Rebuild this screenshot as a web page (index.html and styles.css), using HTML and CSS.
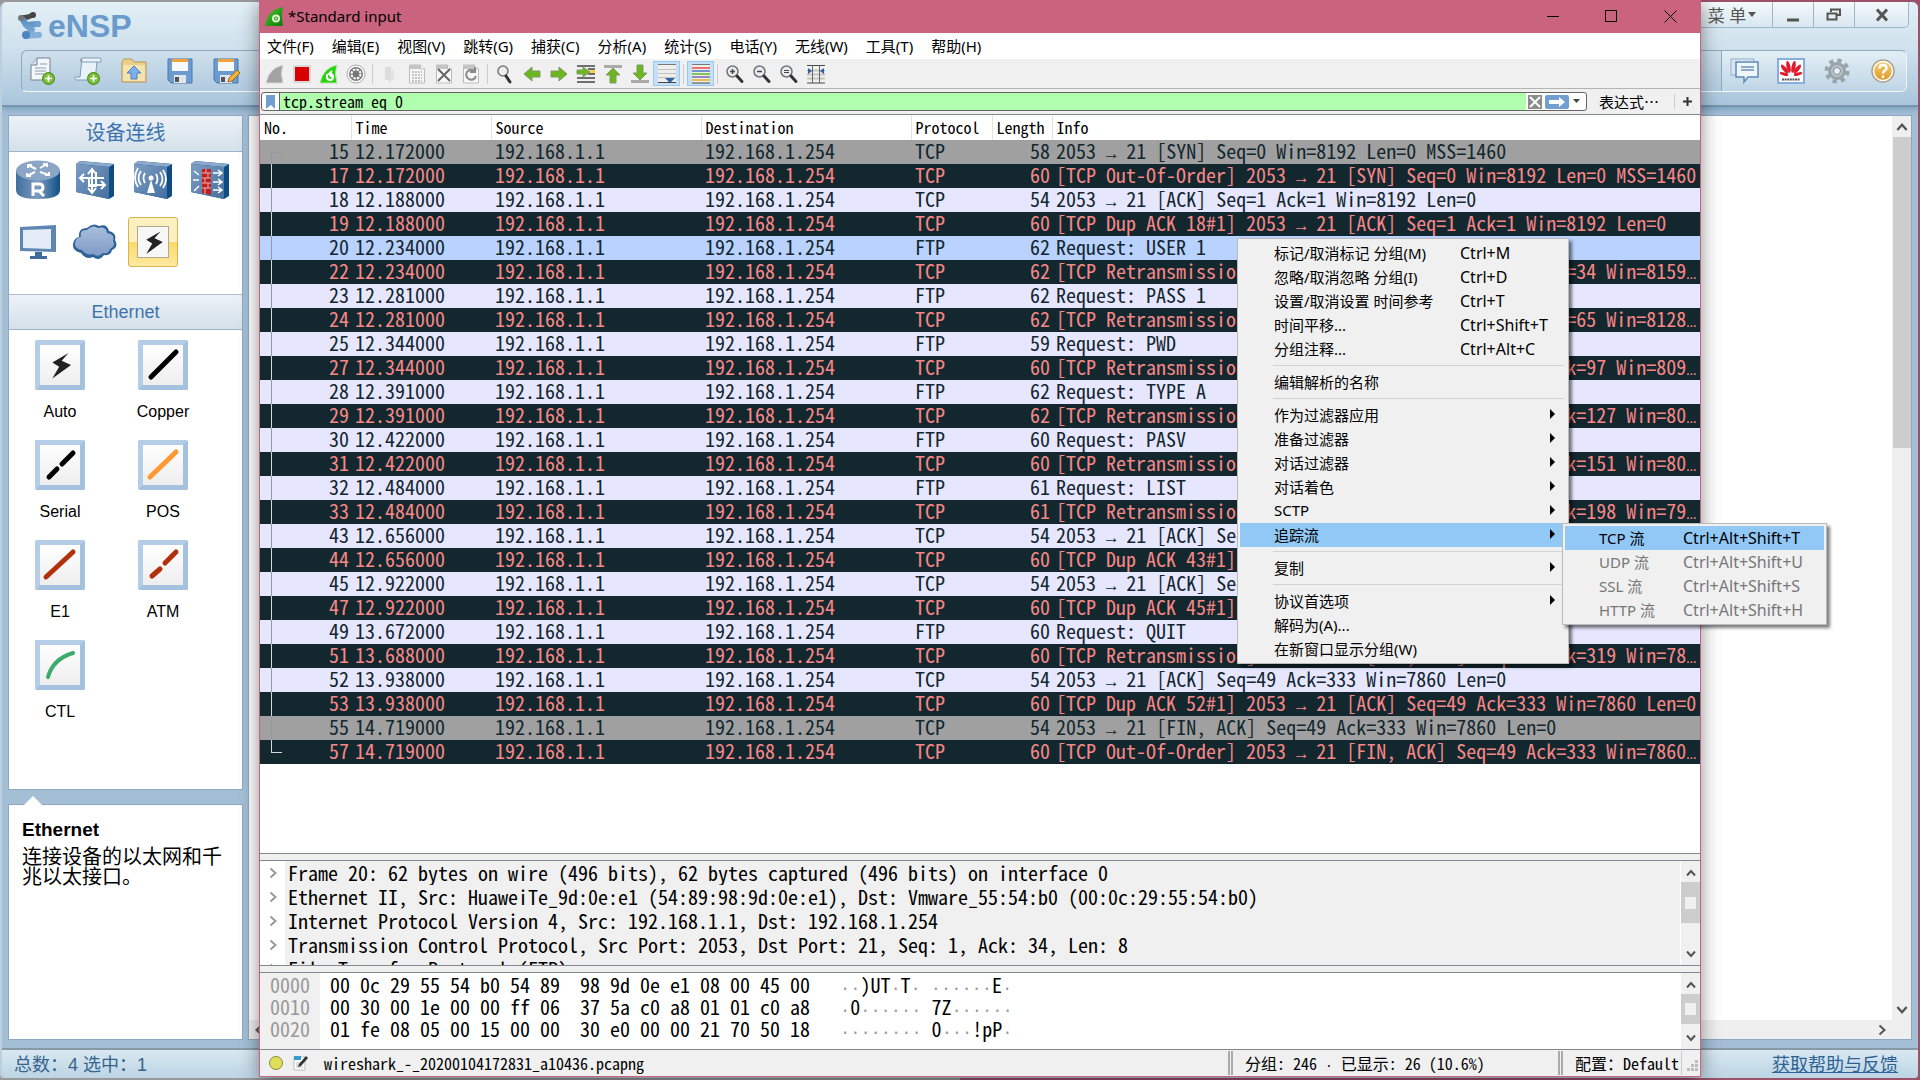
FILE: index.html
```html
<!DOCTYPE html>
<html lang="zh-CN">
<head>
<meta charset="utf-8">
<title>*Standard input</title>
<link rel="stylesheet" href="styles.css">
</head>
<body>
<svg class="defs" aria-hidden="true">
  <defs>
    <linearGradient id="blueFace" x1="0" y1="0" x2="1" y2="1"><stop offset="0" stop-color="#7d9ec4"/><stop offset="1" stop-color="#446f9f"/></linearGradient>
    <linearGradient id="blueSide" x1="0" y1="0" x2="1" y2="0"><stop offset="0" stop-color="#3f6f9e"/><stop offset=".5" stop-color="#7d9cc0"/><stop offset="1" stop-color="#0f4f85"/></linearGradient>
    <linearGradient id="cloudFill" x1="0" y1="0" x2="0" y2="1"><stop offset="0" stop-color="#a9bedb"/><stop offset="1" stop-color="#7f9cc6"/></linearGradient>
    <linearGradient id="logoFill" x1="0" y1="0" x2="0" y2="1"><stop offset="0" stop-color="#5b8fc4"/><stop offset="1" stop-color="#86b2da"/></linearGradient>
    <linearGradient id="finGreen" x1="0" y1="0" x2="1" y2="1"><stop offset="0" stop-color="#4fc62a"/><stop offset="1" stop-color="#0b7a08"/></linearGradient>
    <linearGradient id="gold" x1="0" y1="0" x2="0" y2="1"><stop offset="0" stop-color="#fbd47a"/><stop offset="1" stop-color="#d9941a"/></linearGradient>
    <symbol id="plus" viewBox="0 0 12 12"><circle cx="6" cy="6" r="5.5" fill="#7cbf3a" stroke="#4c8d1e"/><path d="M6 3v6M3 6h6" stroke="#fff" stroke-width="1.6"/></symbol>
    <symbol id="box3d" viewBox="0 0 40 40"><path d="M1 4 5 1 39 4 39 36 34 39 1 32z" fill="#0d4d83"/><path d="M1 4 5 1 39 4 34 7z" fill="#8aa9cb"/><path d="M1 4 34 7 34 39 1 32z" fill="url(#blueFace)"/></symbol>
    <symbol id="lens" viewBox="0 0 20 20"><circle cx="7.500" cy="7.500" r="5.500" fill="#e9ecee" stroke="#70757a" stroke-width="1.500"/><path d="M12 12l5 5.500" stroke="#333" stroke-width="3" stroke-linecap="round"/></symbol>
    <symbol id="sheet" viewBox="0 0 20 20"><path d="M2.500 1h11l4 4v14h-15z" fill="#f7f7f7" stroke="#bcbcbc"/><path d="M2.500 1h11v4h-11z" fill="#c4c4c4"/><path d="M13.500 1v4h4" fill="#fff" stroke="#bcbcbc"/></symbol>
    <symbol id="bolt" viewBox="0 0 40 40"><path d="M30 6 11 17l8 5-8 14 22-16-11-5z" fill="#222"/></symbol>
    <symbol id="up" viewBox="0 0 12 12"><path d="M2 8.500 6 4l4 4.500" fill="none" stroke="#555" stroke-width="2"/></symbol>
    <symbol id="down" viewBox="0 0 12 12"><path d="M2 3.500 6 8l4-4.500" fill="none" stroke="#555" stroke-width="2"/></symbol>
    <symbol id="right" viewBox="0 0 12 12"><path d="M3.500 1.500 8.500 6l-5 4.500" fill="none" stroke="currentColor" stroke-width="2"/></symbol>
    <symbol id="tri" viewBox="0 0 6 10"><path d="M0 0l5 5-5 5z"/></symbol>
    <symbol id="arrowR" viewBox="0 0 20 20"><path d="M2 7h8V3l8 7-8 7v-4H2z" fill="#6cb61e" stroke="#7f9a68"/></symbol>
  </defs>
</svg>

<main class="ensp">
  <header class="ensp-head">
    <div class="ensp-title">
      <div class="logo">
        <svg width="28" height="28" viewBox="0 0 28 28"><path d="M3 6 10 5 15 3" stroke="#4a4a4a" stroke-width="5" fill="none" stroke-linecap="round"/><path d="M5 8 8 13 20 12M8 13l6 5-6 6 13-1" stroke="url(#logoFill)" stroke-width="6" fill="none" stroke-linecap="round" stroke-linejoin="round"/><circle cx="3" cy="6" r="3" fill="#777"/><circle cx="15" cy="3" r="3" fill="#444"/><circle cx="20" cy="12" r="3" fill="#6ea1d2"/><circle cx="8" cy="23" r="4" fill="#4c86c0"/></svg>
        <span class="logo-text">eNSP</span>
      </div>
      <nav class="win-ctl">
        <button class="wc-menu">菜 单<svg width="8" height="6" viewBox="0 0 8 6"><path d="M0 0h8L4 5z" fill="#555"/></svg></button>
        <button aria-label="最小化"><svg width="14" height="14"><path d="M1 12h12" stroke="#555" stroke-width="3"/></svg></button>
        <button aria-label="还原"><svg width="16" height="14"><path d="M5 4V1.500h9V7h-3M1.500 5.500h9v6h-9z" fill="none" stroke="#555" stroke-width="2"/></svg></button>
        <button class="wc-close" aria-label="关闭"><svg width="14" height="14"><path d="M2 1.500l10 11M12 1.500l-10 11" stroke="#555" stroke-width="3"/></svg></button>
      </nav>
    </div>
    <div class="ensp-bar">
      <div class="bar-group">
        <button aria-label="新建拓扑"><svg width="26" height="28" viewBox="0 0 26 28"><path d="M8 1h13v22H2V8z" fill="#f4f7fa" stroke="#6f8396"/><path d="M8 1v7H2" fill="#d7dfe7" stroke="#6f8396"/><path d="M6 11h11M6 14h11M6 17h9M11 7h7" stroke="#8b9dae"/><use href="#plus" x="13" y="15" width="13" height="13"/></svg></button>
        <button aria-label="新建试卷"><svg width="28" height="28" viewBox="0 0 28 28"><path d="M8 1h18q2 0 1 4h-4l-2 18H4q-4 0-3-3h5z" fill="#e9f2f8" stroke="#7e9bb3"/><path d="M8 1q-3 1-1 4h16" fill="none" stroke="#7e9bb3"/><use href="#plus" x="13" y="15" width="13" height="13"/></svg></button>
        <button aria-label="打开"><svg width="28" height="28" viewBox="0 0 28 28"><path d="M2 5 4 2h8l2 3h12v20H2z" fill="#ecd08a" stroke="#b8965a"/><path d="M3 8h22v16H3z" fill="#f5e3ae"/><path d="M14 9l7 7h-4v6h-6v-6H7z" fill="#7db0ee" stroke="#4c7fc0"/></svg></button>
        <button aria-label="保存"><svg width="26" height="26" viewBox="0 0 26 26"><path d="M1 1h24v24H4l-3-3z" fill="#6b9bd0" stroke="#4a78ac"/><path d="M5 1h16v12H5z" fill="#f6f8fa"/><path d="M5 1h16v3H5z" fill="#f0a23c"/><path d="M7 17h12v8H7z" fill="#dfe6ec"/><path d="M8 19h4v5H8z" fill="#555"/></svg></button>
        <button aria-label="另存为"><svg width="27" height="26" viewBox="0 0 27 26"><path d="M1 1h24v24H4l-3-3z" fill="#6b9bd0" stroke="#4a78ac"/><path d="M5 1h16v12H5z" fill="#f6f8fa"/><path d="M5 1h16v3H5z" fill="#f0a23c"/><path d="M7 17h12v8H7z" fill="#dfe6ec"/><path d="M8 19h4v5H8z" fill="#555"/><path d="M15 24l1-4 8-8 3 3-8 8z" fill="#f3b540" stroke="#9a6a1c"/></svg></button>
      </div>
      <div class="bar-group bar-right">
        <button aria-label="论坛"><svg width="30" height="26" viewBox="0 0 30 26"><path d="M1 1h23v16H1z" fill="#d8e6f2" stroke="#8fb0cf"/><path d="M6 4h22v15H18l-4 5v-5H6z" fill="#eef5fb" stroke="#5d8bb8" stroke-width="1.500"/><path d="M11 9h13M11 12h13" stroke="#6b94bf" stroke-width="1.500"/></svg></button>
        <button aria-label="官网"><svg width="28" height="26" viewBox="0 0 28 26"><path d="M1 1h26v24H1z" fill="#fff" stroke="#86aede" stroke-width="2"/><g fill="#e01b2c"><ellipse cx="11.500" cy="9" rx="2" ry="6" transform="rotate(-12 11 9)"/><ellipse cx="16.500" cy="9" rx="2" ry="6" transform="rotate(12 17 9)"/><ellipse cx="7.500" cy="11.500" rx="2" ry="5.500" transform="rotate(-38 7 11)"/><ellipse cx="20.500" cy="11.500" rx="2" ry="5.500" transform="rotate(38 21 11)"/><ellipse cx="7" cy="16" rx="4.500" ry="1.500" transform="rotate(15 7 16)"/><ellipse cx="21" cy="16" rx="4.500" ry="1.500" transform="rotate(-15 21 16)"/></g><path d="M5 21.500h18" stroke="#555" stroke-width="2" stroke-dasharray="2 .6"/></svg></button>
        <button aria-label="设置"><svg width="26" height="26" viewBox="0 0 26 26"><circle cx="13" cy="13" r="10.500" fill="none" stroke="#98a4aa" stroke-width="4" stroke-dasharray="4.250 4"/><circle cx="13" cy="13" r="7.500" fill="#b9c4ca" stroke="#98a4aa" stroke-width="3"/><circle cx="13" cy="13" r="3.500" fill="#e9f1f5" stroke="#7c8890"/></svg></button>
        <button aria-label="帮助"><svg width="26" height="26" viewBox="0 0 26 26"><circle cx="13" cy="13" r="11" fill="url(#gold)" stroke="#a9a291" stroke-width="1.500"/><circle cx="13" cy="13" r="9.500" fill="none" stroke="#fff" stroke-width="1.500"/><path d="M9.500 10.500q0-3.500 3.500-3.500t3.500 3q0 2-2 3-1.500 1-1.500 2.500M13 17.500v2.500" fill="none" stroke="#fff" stroke-width="2.500"/></svg></button>
      </div>
    </div>
  </header>

  <div class="ensp-body">
    <aside class="side">
      <section class="panel devices">
        <h2>设备连线</h2>
        <div class="dev-grid">
          <button aria-label="路由器"><svg width="44" height="40" viewBox="0 0 44 40"><path d="M0 10v20q0 9 22 9t22-9V10z" fill="url(#blueSide)"/><ellipse cx="22" cy="10.500" rx="22" ry="10" fill="#8aa5c6"/><path d="M20 9l-8-4M12 8V5h4M24 12l9 3M33 12v3h-4M24 8l7-4M27 4h4v3M19 12l-8 4M11 13v3h4" stroke="#fff" stroke-width="2" fill="none"/><path d="M17 36V24h6q4 0 4 3.500T23 31h-5M23 31l5 5" stroke="#fff" stroke-width="3" fill="none"/></svg></button>
          <button aria-label="交换机"><svg width="40" height="40" viewBox="0 0 40 40"><use href="#box3d"/><path d="M17 10v22M13 14l4-5 4 5M13 28l4 5 4-5M5 18h24M9 14l-4 4 4 4M14 25h16M26 21l4 4-4 4M21 12v14h-7V18" stroke="#fff" stroke-width="2" fill="none"/></svg></button>
          <button aria-label="无线"><svg width="40" height="40" viewBox="0 0 40 40"><use href="#box3d"/><path d="M18 20l-4 13h8z" fill="#fff"/><circle cx="18" cy="18" r="2.500" fill="#fff"/><path d="M12 13q-3 5 0 10M8 11q-5 7 0 14M5 8q-6 10 0 19M23 14q3 5 0 10M27 12q5 7 0 14M30 10q6 9 0 18" stroke="#fff" stroke-width="1.800" fill="none"/></svg></button>
          <button aria-label="防火墙"><svg width="40" height="40" viewBox="0 0 40 40"><use href="#box3d"/><path d="M12 9h9v26l-9-2z" fill="#c02020"/><path d="M12 13h9M12 18h9M12 23h9M12 28h9M16 9v4M18 13v5M15 18v5M18 23v5M15 28v6" stroke="#f0b0b0"/><path d="M4 11l5 4M3 20h6M4 31l5-5M23 13h8M23 22h8M23 30h8M28 10l4 3-4 3M28 19l4 3-4 3M28 27l4 3-4 3" stroke="#fff" stroke-width="1.500" fill="none"/></svg></button>
          <button aria-label="终端"><svg width="38" height="36" viewBox="0 0 38 36"><path d="M1 3 37 1v27L1 27z" fill="#5f86b2"/><path d="M4 6l28-1v20L4 24z" fill="#e4edf7"/><path d="M16 28h7v4h5v3H11v-3h5z" fill="#3e6c9c"/></svg></button>
          <button aria-label="其他设备"><svg width="46" height="38" viewBox="0 0 46 38"><path d="M9 30q-9-2-8-9 1-6 6-7-1-9 8-9 6-6 12-2 8-3 10 5 8 2 6 9 4 7-3 10-1 6-8 5-5 7-11 2-7 3-12-4z" fill="#2e639a"/><path d="M10 27q-8-1-7-7t6-6q-2-7 6-7 6-6 11-2 8-2 9 5 8 1 6 8 3 5-3 8-1 5-7 4-5 5-10 1-6 2-11-4z" fill="url(#cloudFill)"/></svg></button>
          <button class="picked" aria-label="设备连线"><span class="chip"><svg width="30" height="30"><use href="#bolt"/></svg></span></button>
        </div>
        <h2 class="latin">Ethernet</h2>
        <div class="cables">
          <button><span class="tile"><svg width="40" height="40"><use href="#bolt" x="3" y="3" width="34" height="34"/></svg></span><span class="cap">Auto</span></button>
          <button><span class="tile"><svg width="40" height="40"><path d="M8 32 33 7" stroke="#000" stroke-width="5" stroke-linecap="round"/></svg></span><span class="cap">Copper</span></button>
          <button><span class="tile"><svg width="40" height="40"><path d="M9 32 17 24M22 19 33 8" stroke="#000" stroke-width="5" stroke-linecap="round"/></svg></span><span class="cap">Serial</span></button>
          <button><span class="tile"><svg width="40" height="40"><path d="M7 32 33 7" stroke="#ff9a33" stroke-width="5" stroke-linecap="round"/></svg></span><span class="cap">POS</span></button>
          <button><span class="tile"><svg width="40" height="40"><path d="M6 32 33 7" stroke="#b2310c" stroke-width="5" stroke-linecap="round"/></svg></span><span class="cap">E1</span></button>
          <button><span class="tile"><svg width="40" height="40"><path d="M9 31 17 24M22 18 33 7" stroke="#b2310c" stroke-width="5" stroke-linecap="round"/></svg></span><span class="cap">ATM</span></button>
          <button><span class="tile"><svg width="40" height="40"><path d="M8 32Q13 14 33 8" fill="none" stroke="#3cab6b" stroke-width="4" stroke-linecap="round"/></svg></span><span class="cap">CTL</span></button>
        </div>
      </section>
      <section class="panel info">
        <h3>Ethernet</h3>
        <p>连接设备的以太网和千兆以太接口。</p>
      </section>
    </aside>
    <section class="canvas">
      <div class="page"></div>
      <div class="vbar"><svg width="14" height="14"><use href="#up"/></svg><span class="vthumb"></span><svg class="push" width="14" height="14"><use href="#down"/></svg></div>
      <div class="hbar"><svg class="flip" width="12" height="12"><use href="#right"/></svg><svg width="12" height="12"><use href="#right"/></svg></div>
    </section>
  </div>
  <footer class="ensp-foot"><span>总数：4 选中：1</span><a href="#help">获取帮助与反馈</a></footer>
</main>

<section class="shark">
  <header class="titlebar">
    <svg width="20" height="20" viewBox="0 0 20 20"><path d="M1 19Q3 3 19 0q-2 9 0 19z" fill="url(#finGreen)"/><circle cx="12" cy="11.500" r="3" fill="none" stroke="#dff5d5" stroke-width="2"/><circle cx="12" cy="11.500" r="1" fill="#dff5d5"/></svg>
    <h1>*Standard input</h1>
    <button aria-label="最小化"><svg width="12" height="12"><path d="M0 5.500h12" stroke="#000"/></svg></button>
    <button aria-label="最大化"><svg width="13" height="13"><path d="M.5.500h11v11H.5z" fill="none" stroke="#000"/></svg></button>
    <button aria-label="关闭"><svg width="13" height="13"><path d="M.5.500l12 12M12.500.500l-12 12" stroke="#000"/></svg></button>
  </header>
  <nav class="menubar">
    <button>文件(F)</button><button>编辑(E)</button><button>视图(V)</button><button>跳转(G)</button><button>捕获(C)</button><button>分析(A)</button><button>统计(S)</button><button>电话(Y)</button><button>无线(W)</button><button>工具(T)</button><button>帮助(H)</button>
  </nav>
  <div class="tools">
    <button aria-label="开始捕获"><svg width="20" height="20"><path d="M1 19Q4 4 18 1q-3 8 0 18z" fill="#a2a2a2" stroke="#d8d8d8"/></svg></button>
    <button aria-label="停止捕获"><svg width="20" height="20"><path d="M1 1h18v18H1z" fill="#d8d8d8"/><path d="M3 3h14v14H3z" fill="#d80000"/></svg></button>
    <button aria-label="重新捕获"><svg width="20" height="20"><path d="M1 19Q4 4 18 1q-3 8 0 18z" fill="#22d60a" stroke="#b9dcb4"/><path d="M8 10v3q0 3 3 3t3-3-3-3M13 7l-3 3 3 3" fill="none" stroke="#fff" stroke-width="2"/></svg></button>
    <button aria-label="捕获选项"><svg width="20" height="20"><circle cx="10" cy="10" r="9" fill="#fff" stroke="#aaa"/><circle cx="10" cy="10" r="7" fill="#777"/><circle cx="10" cy="10" r="4.500" fill="none" stroke="#fff" stroke-width="2" stroke-dasharray="2.500 1"/><circle cx="10" cy="10" r="2.500" fill="#777"/></svg></button>
    <i class="sep"></i>
    <button aria-label="打开"><svg width="20" height="20"><path d="M5 3h6v16l-3-3H5z" fill="#ddd"/><path d="M11 6h3v10h-3z" fill="#e4e4e4"/></svg></button>
    <button aria-label="保存"><svg width="20" height="20"><use href="#sheet"/><path d="M5 8h10M5 11h10M5 14h10M5 17h10" stroke="#c4c4c4" stroke-width="2" stroke-dasharray="2 1"/></svg></button>
    <button aria-label="关闭文件"><svg width="20" height="20"><use href="#sheet"/><path d="M4 5l12 12M16 5L4 17" stroke="#666" stroke-width="2"/></svg></button>
    <button aria-label="重新加载"><svg width="20" height="20"><use href="#sheet"/><path d="M14 7.500A5 5 0 1 0 15 12M14 3v5H9" fill="none" stroke="#888" stroke-width="2"/></svg></button>
    <i class="sep"></i>
    <button aria-label="查找"><svg width="20" height="20"><circle cx="8" cy="7" r="5" fill="#eee" stroke="#777" stroke-width="1.500"/><path d="M11 12l4 6" stroke="#333" stroke-width="3" stroke-linecap="round"/></svg></button>
    <button aria-label="后退"><svg class="flip" width="20" height="20"><use href="#arrowR"/></svg></button>
    <button aria-label="前进"><svg width="20" height="20"><use href="#arrowR"/></svg></button>
    <button aria-label="转到"><svg width="20" height="20"><path d="M1 2h18M1 14h18M1 18h18M12 5h7M12 10h7" stroke="#444" stroke-width="1.500"/><path d="M14 6h5v3h-5z" fill="#f4d24a"/><path d="M1 6h6V3l7 5-7 5v-3H1z" fill="#6cb61e" stroke="#7f9a68"/></svg></button>
    <button aria-label="首个"><svg width="20" height="20"><path d="M1 1h18v3H1z" fill="#aaa"/><path d="M7 19v-8H3l7-7 7 7h-4v8z" fill="#6cb61e" stroke="#7f9a68"/></svg></button>
    <button aria-label="末个"><svg width="20" height="20"><path d="M1 16h18v3H1z" fill="#aaa"/><path d="M7 1v8H3l7 7 7-7h-4V1z" fill="#6cb61e" stroke="#7f9a68"/></svg></button>
    <button class="on" aria-label="自动滚动"><svg width="20" height="20"><path d="M1 1h18v17H1z" fill="#eeeeec"/><path d="M1 .5h18" stroke="#777"/><path d="M1 5.500h18M1 9.500h18M1 13.500h18" stroke="#c2c2ba"/><path d="M1 18.500h18" stroke="#444"/><path d="M8 14h10l-4 4h-2z" fill="#2c62a8"/></svg></button>
    <i class="sep"></i>
    <button class="on" aria-label="着色"><svg width="20" height="20"><path d="M1 1h18v18H1z" fill="#eeeeec"/><path d="M1 .5h18" stroke="#777"/><path d="M1 4h18" stroke="#e84a4a" stroke-width="1.500"/><path d="M1 7h18" stroke="#4a76c8" stroke-width="1.500"/><path d="M1 10h18" stroke="#5ab82a" stroke-width="1.500"/><path d="M1 13h18" stroke="#7c63b4" stroke-width="1.500"/><path d="M1 16h18" stroke="#d8b020" stroke-width="1.500"/><path d="M1 19h18" stroke="#444"/></svg></button>
    <i class="sep"></i>
    <button aria-label="放大"><svg width="20" height="20"><use href="#lens"/><path d="M7.500 5v5M5 7.500h5" stroke="#444" stroke-width="1.500"/></svg></button>
    <button aria-label="缩小"><svg width="20" height="20"><use href="#lens"/><path d="M5 7.500h5" stroke="#444" stroke-width="1.500"/></svg></button>
    <button aria-label="原始大小"><svg width="20" height="20"><use href="#lens"/><path d="M5 6.500h5M5 8.500h5" stroke="#444"/></svg></button>
    <button aria-label="调整列宽"><svg width="20" height="20"><path d="M1 1.500h18M1 19h18" stroke="#444"/><path d="M1 6.500h18M1 10.500h18M1 14.500h18" stroke="#c4c4bc" stroke-width="2"/><path d="M6.500 1v18M13.500 1v18" stroke="#666"/><path d="M2 4l4 3-4 3zM18 4l-4 3 4 3z" fill="#2c62a8"/></svg></button>
  </div>
  <form class="filter">
    <div class="filter-box">
      <button type="button" class="mark" aria-label="书签"><svg width="10" height="14"><path d="M0 0h9v14l-4-4-5 4z" fill="#729fd2"/></svg></button>
      <input aria-label="显示过滤器" value="tcp.stream eq 0" spellcheck="false">
      <button type="button" class="clear" aria-label="清除"><svg width="14" height="14"><path d="M0 0h14v14H0z" fill="#8a8c88"/><path d="M2 2l10 10M12 2L2 12" stroke="#fff" stroke-width="2"/></svg></button>
      <button type="button" class="apply" aria-label="应用"><svg width="24" height="14"><rect width="24" height="14" rx="2" fill="#729fd2"/><path d="M4 5h10V2l6 5-6 5V9H4z" fill="#fff"/></svg></button>
      <button type="button" class="drop" aria-label="历史"><svg width="8" height="5"><path d="M0 0h7L3.500 4z" fill="#444"/></svg></button>
    </div>
    <button type="button" class="expr">表达式…</button>
    <i class="sep"></i>
    <button type="button" class="add" aria-label="添加"><svg width="9" height="9"><path d="M4.500 0v9M0 4.500h9" stroke="#333" stroke-width="2"/></svg></button>
  </form>

  <div class="packets">
    <table>
      <colgroup><col class="c-no"><col class="c-time"><col class="c-addr"><col class="c-addr"><col class="c-proto"><col class="c-len"><col></colgroup>
      <thead><tr><th>No.</th><th>Time</th><th>Source</th><th>Destination</th><th>Protocol</th><th>Length</th><th>Info</th></tr></thead>
      <tbody>
        <tr class="g first"><td>15</td><td>12.172000</td><td>192.168.1.1</td><td>192.168.1.254</td><td>TCP</td><td>58</td><td><span>2053 <b>→</b> 21 [SYN] Seq=0 Win=8192 Len=0 MSS=1460</span></td></tr>
        <tr class="d"><td>17</td><td>12.172000</td><td>192.168.1.1</td><td>192.168.1.254</td><td>TCP</td><td>60</td><td><span>[TCP Out-Of-Order] 2053 <b>→</b> 21 [SYN] Seq=0 Win=8192 Len=0 MSS=1460</span></td></tr>
        <tr><td>18</td><td>12.188000</td><td>192.168.1.1</td><td>192.168.1.254</td><td>TCP</td><td>54</td><td><span>2053 <b>→</b> 21 [ACK] Seq=1 Ack=1 Win=8192 Len=0</span></td></tr>
        <tr class="d"><td>19</td><td>12.188000</td><td>192.168.1.1</td><td>192.168.1.254</td><td>TCP</td><td>60</td><td><span>[TCP Dup ACK 18#1] 2053 <b>→</b> 21 [ACK] Seq=1 Ack=1 Win=8192 Len=0</span></td></tr>
        <tr class="s"><td>20</td><td>12.234000</td><td>192.168.1.1</td><td>192.168.1.254</td><td>FTP</td><td>62</td><td><span>Request: USER 1</span></td></tr>
        <tr class="d"><td>22</td><td>12.234000</td><td>192.168.1.1</td><td>192.168.1.254</td><td>TCP</td><td>62</td><td><span>[TCP Retransmission] 2053 <b>→</b> 21 [PSH, ACK] Seq=1 Ack=34 Win=8159 Len=8</span></td></tr>
        <tr><td>23</td><td>12.281000</td><td>192.168.1.1</td><td>192.168.1.254</td><td>FTP</td><td>62</td><td><span>Request: PASS 1</span></td></tr>
        <tr class="d"><td>24</td><td>12.281000</td><td>192.168.1.1</td><td>192.168.1.254</td><td>TCP</td><td>62</td><td><span>[TCP Retransmission] 2053 <b>→</b> 21 [PSH, ACK] Seq=9 Ack=65 Win=8128 Len=8</span></td></tr>
        <tr><td>25</td><td>12.344000</td><td>192.168.1.1</td><td>192.168.1.254</td><td>FTP</td><td>59</td><td><span>Request: PWD</span></td></tr>
        <tr class="d"><td>27</td><td>12.344000</td><td>192.168.1.1</td><td>192.168.1.254</td><td>TCP</td><td>60</td><td><span>[TCP Retransmission] 2053 <b>→</b> 21 [PSH, ACK] Seq=17 Ack=97 Win=8096 Len=5</span></td></tr>
        <tr><td>28</td><td>12.391000</td><td>192.168.1.1</td><td>192.168.1.254</td><td>FTP</td><td>62</td><td><span>Request: TYPE A</span></td></tr>
        <tr class="d"><td>29</td><td>12.391000</td><td>192.168.1.1</td><td>192.168.1.254</td><td>TCP</td><td>62</td><td><span>[TCP Retransmission] 2053 <b>→</b> 21 [PSH, ACK] Seq=22 Ack=127 Win=8066 Len=8</span></td></tr>
        <tr><td>30</td><td>12.422000</td><td>192.168.1.1</td><td>192.168.1.254</td><td>FTP</td><td>60</td><td><span>Request: PASV</span></td></tr>
        <tr class="d"><td>31</td><td>12.422000</td><td>192.168.1.1</td><td>192.168.1.254</td><td>TCP</td><td>60</td><td><span>[TCP Retransmission] 2053 <b>→</b> 21 [PSH, ACK] Seq=30 Ack=151 Win=8042 Len=6</span></td></tr>
        <tr><td>32</td><td>12.484000</td><td>192.168.1.1</td><td>192.168.1.254</td><td>FTP</td><td>61</td><td><span>Request: LIST</span></td></tr>
        <tr class="d"><td>33</td><td>12.484000</td><td>192.168.1.1</td><td>192.168.1.254</td><td>TCP</td><td>61</td><td><span>[TCP Retransmission] 2053 <b>→</b> 21 [PSH, ACK] Seq=36 Ack=198 Win=7995 Len=7</span></td></tr>
        <tr><td>43</td><td>12.656000</td><td>192.168.1.1</td><td>192.168.1.254</td><td>TCP</td><td>54</td><td><span>2053 <b>→</b> 21 [ACK] Seq=43</span></td></tr>
        <tr class="d"><td>44</td><td>12.656000</td><td>192.168.1.1</td><td>192.168.1.254</td><td>TCP</td><td>60</td><td><span>[TCP Dup ACK 43#1] 2053</span></td></tr>
        <tr><td>45</td><td>12.922000</td><td>192.168.1.1</td><td>192.168.1.254</td><td>TCP</td><td>54</td><td><span>2053 <b>→</b> 21 [ACK] Seq=43</span></td></tr>
        <tr class="d"><td>47</td><td>12.922000</td><td>192.168.1.1</td><td>192.168.1.254</td><td>TCP</td><td>60</td><td><span>[TCP Dup ACK 45#1] 2053</span></td></tr>
        <tr><td>49</td><td>13.672000</td><td>192.168.1.1</td><td>192.168.1.254</td><td>FTP</td><td>60</td><td><span>Request: QUIT</span></td></tr>
        <tr class="d"><td>51</td><td>13.688000</td><td>192.168.1.1</td><td>192.168.1.254</td><td>TCP</td><td>60</td><td><span>[TCP Retransmission] 2053 <b>→</b> 21 [PSH, ACK] Seq=43 Ack=319 Win=7874 Len=6</span></td></tr>
        <tr><td>52</td><td>13.938000</td><td>192.168.1.1</td><td>192.168.1.254</td><td>TCP</td><td>54</td><td><span>2053 <b>→</b> 21 [ACK] Seq=49 Ack=333 Win=7860 Len=0</span></td></tr>
        <tr class="d"><td>53</td><td>13.938000</td><td>192.168.1.1</td><td>192.168.1.254</td><td>TCP</td><td>60</td><td><span>[TCP Dup ACK 52#1] 2053 <b>→</b> 21 [ACK] Seq=49 Ack=333 Win=7860 Len=0</span></td></tr>
        <tr class="g"><td>55</td><td>14.719000</td><td>192.168.1.1</td><td>192.168.1.254</td><td>TCP</td><td>54</td><td><span>2053 <b>→</b> 21 [FIN, ACK] Seq=49 Ack=333 Win=7860 Len=0</span></td></tr>
        <tr class="d last"><td>57</td><td>14.719000</td><td>192.168.1.1</td><td>192.168.1.254</td><td>TCP</td><td>60</td><td><span>[TCP Out-Of-Order] 2053 <b>→</b> 21 [FIN, ACK] Seq=49 Ack=333 Win=7860 Len=0</span></td></tr>
      </tbody>
    </table>
  </div>

  <div class="pane detail">
    <ul>
      <li><svg width="12" height="12"><use href="#right"/></svg><span>Frame 20: 62 bytes on wire (496 bits), 62 bytes captured (496 bits) on interface 0</span></li>
      <li><svg width="12" height="12"><use href="#right"/></svg><span>Ethernet II, Src: HuaweiTe_9d:0e:e1 (54:89:98:9d:0e:e1), Dst: Vmware_55:54:b0 (00:0c:29:55:54:b0)</span></li>
      <li><svg width="12" height="12"><use href="#right"/></svg><span>Internet Protocol Version 4, Src: 192.168.1.1, Dst: 192.168.1.254</span></li>
      <li><svg width="12" height="12"><use href="#right"/></svg><span>Transmission Control Protocol, Src Port: 2053, Dst Port: 21, Seq: 1, Ack: 34, Len: 8</span></li>
      <li><svg width="12" height="12"><use href="#right"/></svg><span>File Transfer Protocol (FTP)</span></li>
    </ul>
    <div class="scroll"><svg width="12" height="12"><use href="#up"/></svg><span class="thumb tall"></span><svg class="push" width="12" height="12"><use href="#down"/></svg></div>
  </div>

  <div class="pane hex">
    <pre class="offs">0000
0010
0020</pre>
    <pre class="bytes">00 0c 29 55 54 b0 54 89  98 9d 0e e1 08 00 45 00
00 30 00 1e 00 00 ff 06  37 5a c0 a8 01 01 c0 a8
01 fe 08 05 00 15 00 00  30 e0 00 00 21 70 50 18</pre>
    <pre class="ascii"><i>··</i>)UT<i>·</i>T<i>·</i> <i>······</i>E<i>·</i>
<i>·</i>0<i>······</i> 7Z<i>······</i>
<i>········</i> 0<i>···</i>!pP<i>·</i></pre>
    <div class="scroll"><svg width="12" height="12"><use href="#up"/></svg><span class="thumb"></span><svg class="push" width="12" height="12"><use href="#down"/></svg></div>
  </div>

  <footer class="status">
    <button aria-label="专家信息"><svg width="16" height="16"><circle cx="8" cy="8" r="6.500" fill="#dfe05a" stroke="#88883c"/></svg></button>
    <button aria-label="注释"><svg width="16" height="16"><path d="M1 2h11v13H1z" fill="#fff" stroke="#bbb"/><path d="M1 1h7v4H1z" fill="#3a9bd0"/><path d="M3 8h6M3 10h5M3 12h7" stroke="#bbb"/><path d="M5 12l1-3 7-8 2 2-7 8z" fill="#333"/></svg></button>
    <span class="file">wireshark_-_20200104172831_a10436.pcapng</span>
    <span class="count">分组: 246 <b>·</b> 已显示: 26 (10.6%)</span>
    <span class="profile">配置：Default</span>
    <svg class="grip" width="12" height="12"><path d="M8 0h3v3H8zM4 4h3v3H4zM8 4h3v3H8zM0 8h3v3H0zM4 8h3v3H4zM8 8h3v3H8z" fill="#bbb"/></svg>
  </footer>
</section>

<div class="ctx" role="menu">
  <button role="menuitem"><span>标记/取消标记 分组(M)</span><kbd>Ctrl+M</kbd></button>
  <button role="menuitem"><span>忽略/取消忽略 分组(I)</span><kbd>Ctrl+D</kbd></button>
  <button role="menuitem"><span>设置/取消设置 时间参考</span><kbd>Ctrl+T</kbd></button>
  <button role="menuitem"><span>时间平移...</span><kbd>Ctrl+Shift+T</kbd></button>
  <button role="menuitem"><span>分组注释...</span><kbd>Ctrl+Alt+C</kbd></button>
  <hr>
  <button role="menuitem"><span>编辑解析的名称</span></button>
  <hr>
  <button role="menuitem"><span>作为过滤器应用</span><svg width="6" height="10"><use href="#tri"/></svg></button>
  <button role="menuitem"><span>准备过滤器</span><svg width="6" height="10"><use href="#tri"/></svg></button>
  <button role="menuitem"><span>对话过滤器</span><svg width="6" height="10"><use href="#tri"/></svg></button>
  <button role="menuitem"><span>对话着色</span><svg width="6" height="10"><use href="#tri"/></svg></button>
  <button role="menuitem"><span>SCTP</span><svg width="6" height="10"><use href="#tri"/></svg></button>
  <div class="has-sub">
    <button role="menuitem" class="hot"><span>追踪流</span><svg width="6" height="10"><use href="#tri"/></svg></button>
    <div class="sub" role="menu">
      <button role="menuitem" class="hot"><span>TCP 流</span><kbd>Ctrl+Alt+Shift+T</kbd></button>
      <button role="menuitem" disabled><span>UDP 流</span><kbd>Ctrl+Alt+Shift+U</kbd></button>
      <button role="menuitem" disabled><span>SSL 流</span><kbd>Ctrl+Alt+Shift+S</kbd></button>
      <button role="menuitem" disabled><span>HTTP 流</span><kbd>Ctrl+Alt+Shift+H</kbd></button>
    </div>
  </div>
  <hr>
  <button role="menuitem"><span>复制</span><svg width="6" height="10"><use href="#tri"/></svg></button>
  <hr>
  <button role="menuitem"><span>协议首选项</span><svg width="6" height="10"><use href="#tri"/></svg></button>
  <button role="menuitem"><span>解码为(A)...</span></button>
  <button role="menuitem"><span>在新窗口显示分组(W)</span></button>
</div>
</body>
</html>
```

FILE: styles.css
```css
:root {
  --mono: "Noto Sans Mono CJK SC", "Liberation Mono", monospace;
  --narrow-mono: "Liberation Mono", monospace;
}
* { box-sizing: border-box; }
body {
  margin: 0;
  height: 100vh;
  overflow: hidden;
  position: relative;
  display: flex;
  padding: 2px 2px 2px 0;
  background: linear-gradient(90deg, #999 50%, #9b5168 50%);
  font-family: "Noto Sans", "Noto Sans CJK SC", sans-serif;
  font-size: 15px;
  color: #000;
}
button { border: 0; padding: 0; margin: 0; background: none; font: inherit; color: inherit; }
svg { display: block; flex: none; }
.defs { position: absolute; width: 0; height: 0; }
.flip { transform: rotate(180deg); }
.push { margin-top: auto; }

/* ---- eNSP window ---- */
.ensp {
  flex: 1;
  display: flex;
  flex-direction: column;
  min-width: 0;
  border-left: 2px solid #bccfdc;
  border-radius: 6px 6px 4px 4px;
  background: #a4bed5;
  overflow: hidden;
}
.ensp-head {
  height: 105px;
  border-bottom: 2px solid #7694ac;
  background: linear-gradient(#e3f0f6, #cfe1ed 45%, #a9c5dc);
  box-shadow: 0 3px 5px #7fa3c0;
}
.ensp-title { display: flex; justify-content: space-between; height: 48px; }
.logo { display: flex; align-items: center; gap: 2px; padding: 0 0 0 16px; }
.logo-text {
  font: bold 32px/48px "Liberation Sans", sans-serif;
  color: #6a9bcd;
}
.win-ctl { display: flex; height: 26px; margin-right: 9px; border: 1px solid #9fb6c6; border-top: 0; border-radius: 0 0 5px 5px; background: linear-gradient(#f4f9fb, #d8e7f0); }
.win-ctl button { width: 41px; display: flex; align-items: center; justify-content: center; border-left: 1px solid #9fb6c6; }
.win-ctl .wc-menu { width: 80px; gap: 2px; color: #555; font-size: 17px; border-left: 0; }
.win-ctl .wc-close { width: 54px; }
.ensp-bar {
  display: flex;
  justify-content: space-between;
  height: 42px;
  margin: 0 11px 0 19px;
  border: 1px solid #8fabc1;
  border-color: #8fabc1 #edf5f9 #f4f9fc #8fabc1;
  border-radius: 6px;
  background: linear-gradient(#cfe0eb, #b0cadf);
}
.bar-group { display: flex; margin-left: -3px; }
.bar-group button { width: 46px; display: flex; align-items: center; justify-content: center; }
.bar-right { border-left: 1px solid #8fabc1; border-radius: 0 6px 6px 0; background: linear-gradient(#e3eff5, #bfd5e5); }

.ensp-body { flex: 1; min-height: 0; display: flex; gap: 5px; padding: 8px 6px 8px 6px; }
.side { width: 235px; flex: none; display: flex; flex-direction: column; gap: 14px; }
.panel { background: #fff; border: 1px solid #8da8c4; }
.devices { flex: 1; }
.panel h2 {
  margin: 0;
  height: 36px;
  border-bottom: 1px solid #9fb3c8;
  background: linear-gradient(#edf2f8, #d4e0ea);
  text-align: center;
  font: 20px/32px "Noto Sans CJK SC", sans-serif;
  color: #3d74ad;
}
.panel h2.latin { border-top: 1px solid #b0bcc8; font: 18px/34px "Liberation Sans", sans-serif; }
.dev-grid { display: grid; grid-template-columns: repeat(4, 1fr); grid-auto-rows: 56px; row-gap: 6px; height: 142px; padding-right: 3px; }
.dev-grid button { display: flex; align-items: center; justify-content: center; }
.dev-grid .picked { align-self: center; justify-self: center; width: 50px; height: 50px; border: 1px solid #d8b34e; border-radius: 3px; background: linear-gradient(#fdf0c0 50%, #fbd968 50%, #fdeaa0); }
.chip { border: 1px solid #b3a98c; background: #f7f7f7; }
.cables { display: grid; grid-template-columns: 102px 104px; grid-auto-rows: 94px; row-gap: 6px; padding-top: 10px; }
.cables button { display: flex; flex-direction: column; align-items: center; }
.tile { border: 5px solid #a9c4e2; border-color: #b5cde6 #a5c1e0 #a5c1e0 #b5cde6; border-radius: 2px; background: linear-gradient(#fff, #eee); }
.cap { font: 16px/44px "Liberation Sans", sans-serif; }
.info { position: relative; height: 236px; padding: 13px; }
.info::before { content: ""; position: absolute; left: 15px; top: -9px; border: 9px solid transparent; border-top: 0; border-bottom-color: #fff; }
.info h3 { margin: 0; font: bold 19px/24px "Liberation Sans", sans-serif; }
.info p { margin: 4px 0 0; font: 20px/20px "Noto Sans CJK SC", sans-serif; }
.canvas {
  flex: 1;
  display: grid;
  grid-template: 1fr 19px / 1fr 19px;
  border: 1px solid #8da8c4;
  background: #efefef;
}
.page { background: #fff; }
.vbar { grid-row: 1 / 3; grid-column: 2; display: flex; flex-direction: column; align-items: center; padding: 4px 0 22px; }
.vthumb { width: 18px; height: 311px; margin-top: 3px; background: #cdcdcd; }
.hbar { display: flex; align-items: center; justify-content: space-between; padding: 0 4px; color: #555; }
.ensp-foot {
  display: flex;
  align-items: center;
  justify-content: space-between;
  height: 30px;
  padding: 2px 20px 0 12px;
  border-top: 2px solid #8799a6;
  background: linear-gradient(#d9e8f1, #bcd4e4);
  font: 18px/26px "Liberation Sans", "Noto Sans CJK SC", sans-serif;
  color: #36648c;
}
.ensp-foot a { color: #2d6293; }

/* ---- capture window, floating over eNSP ---- */
.shark {
  position: absolute;
  left: 259px;
  right: 219px;
  top: 0;
  bottom: 3px;
  display: flex;
  flex-direction: column;
  border: 1px solid #c9637e;
  border-top: 0;
  background: #f0f0f0;
  box-shadow: 0 4px 18px rgba(0, 0, 0, .45);
}
.titlebar { display: flex; align-items: center; height: 33px; padding-left: 4px; background: #c9637e; }
.titlebar h1 { flex: 1; margin: 0 0 0 4px; font-size: 15px; line-height: 20px; padding-bottom: 2px; font-weight: 400; }
.titlebar button { width: 59px; height: 33px; display: flex; align-items: center; justify-content: center; }
.menubar { display: flex; gap: 18px; height: 26px; padding-left: 7px; background: #fff; line-height: 26px; }
.menubar button { white-space: nowrap; }
.tools { display: flex; align-items: center; height: 30px; padding-left: 1px; border-bottom: 1px solid #b4b4b4; }
.tools button { width: 27px; height: 25px; display: flex; align-items: center; justify-content: center; }
.tools .on { border: 1px solid #99c9f0; background: #c3e0f7; }
.sep { width: 1px; height: 20px; margin: 0 3px; background: #ccc; }
.filter { display: flex; align-items: center; height: 25px; padding-left: 1px; }
.filter-box { flex: 1; display: flex; align-items: center; height: 19px; border: 1px solid #666; border-radius: 3px; background: #fff; overflow: hidden; }
.filter-box input {
  flex: 1;
  min-width: 0;
  height: 17px;
  border: 0;
  border-left: 1px solid #666;
  padding: 0 3px 2px;
  background: #afffaf;
  font: 16px/15px var(--mono);
}
.mark { width: 17px; display: flex; justify-content: center; }
.clear { margin: 0 3px 0 2px; }
.drop { width: 17px; display: flex; justify-content: center; }
.expr { margin: 0 15px 0 12px; font: 15px/24px "Noto Sans CJK SC", sans-serif; }
.add { margin: 0 8px; }
.filter .sep { height: 15px; margin: 0; }

.packets { flex: 1; min-height: 0; overflow: hidden; background: #fff; border: solid #828790; border-width: 1px 0; }
table { width: 100%; table-layout: fixed; border-collapse: collapse; font: 20px/21px var(--mono); }
.c-no { width: 91px; }
.c-time { width: 140px; }
.c-addr { width: 210px; }
.c-proto { width: 81px; }
.c-len { width: 60px; }
th { height: 25px; padding: 0 0 2px 4px; border-left: 1px solid #e2e2e2; text-align: left; font: 16px/22px var(--mono); }
th:first-child { border-left: 0; }
td { height: 24px; padding: 0 2px 3px 4px; white-space: nowrap; }
td:nth-child(1), td:nth-child(6) { text-align: right; }
/* the cell's own font sizes the ellipsis; the span carries the text */
td:last-child { overflow: hidden; text-overflow: ellipsis; font: 17px/0 var(--narrow-mono); }
td span { font: 20px/21px var(--mono); }
td b { font: 17px/0 var(--narrow-mono); }
tbody tr { background: #e7e6ff; color: #12272e; }
tbody .g { background: #a0a0a0; }
tbody .d { background: #12272e; color: #f78787; }
tbody .s { background: #b9d2ff; }
td:first-child { position: relative; }
td:first-child::before { content: ""; position: absolute; left: 11px; top: 0; bottom: 0; width: 10px; border-left: 1px solid #8e9aa4; }
.d td:first-child::before { border-color: #d8d8d8; }
.first td:first-child::before { top: 12px; border-top: 1px solid #8e9aa4; }
.last td:first-child::before { bottom: 11px; border-bottom: 1px solid #d8d8d8; }

.pane { display: flex; margin-top: 6px; border: solid #828790; border-width: 1px 0; overflow: hidden; font: 20px/24px var(--mono); }
.detail { height: 106px; background: #fff; }
.detail ul { flex: 1; min-width: 0; margin: 0; padding: 0; list-style: none; }
.detail li { display: flex; align-items: center; gap: 6px; height: 24px; padding-left: 7px; color: #999; white-space: nowrap; }
.detail li span { flex: 1; padding-left: 3px; background: #f0f0f0; color: #000; }
.scroll { width: 20px; flex: none; display: flex; flex-direction: column; align-items: center; padding: 6px 0 5px; background: #f0f0f0; border-left: 1px solid #fff; }
.thumb { width: 19px; height: 30px; margin-top: 3px; border: solid #cdcdcd; border-width: 9px 4px; background: #f0f0f0; }
.thumb.tall { height: 41px; border-width: 15px 4px 14px; }
.hex { height: 78px; background: #fff; line-height: 22px; }
.hex pre { margin: 0; padding-top: 1px; font: inherit; }
.hex .offs { width: 60px; padding-left: 10px; background: #f0f0f0; color: #999; }
.hex .bytes { width: 520px; padding-left: 10px; }
.hex .ascii { flex: 1; }
.hex i { font: 17px/0 var(--narrow-mono); color: #999; }
.status { display: flex; align-items: center; height: 26px; padding-left: 8px; font: 16px/24px var(--mono); white-space: nowrap; }
.status button { margin-right: 9px; }
.status b { font: 13px/0 var(--narrow-mono); }
.file { flex: 1; padding-left: 6px; }
.count { width: 330px; padding-left: 12px; border-left: 5px double #aaa; }
.profile { width: 124px; padding-left: 12px; border-left: 5px double #aaa; border-right: 1px solid #ccc; }
.grip { margin: 6px 1px 0 5px; }

/* ---- context menu ---- */
.ctx, .sub { position: absolute; border: 1px solid #bbb; background: #f0f0f0; box-shadow: 3px 3px 3px rgba(0, 0, 0, .5); }
.ctx { left: 1237px; top: 238px; width: 332px; padding: 2px; }
.ctx button { display: flex; align-items: center; width: 100%; height: 24px; padding: 0 10px 2px 34px; text-align: left; white-space: nowrap; }
.ctx span { width: 186px; }
.ctx kbd { padding-top: 2px; font: 16px/22px "Noto Sans", sans-serif; }
.ctx button > svg { margin-left: auto; }
.ctx hr { height: 1px; margin: 4px 2px 4px 33px; border: 0; background: #d2d2d2; }
.ctx .hot { background: #91c8f6; }
.ctx button:disabled { color: #777; }
.has-sub { position: relative; }
.ctx .sub { left: 322px; top: 0; width: 265px; padding: 2px; }
.ctx .sub span { width: 84px; }
```
